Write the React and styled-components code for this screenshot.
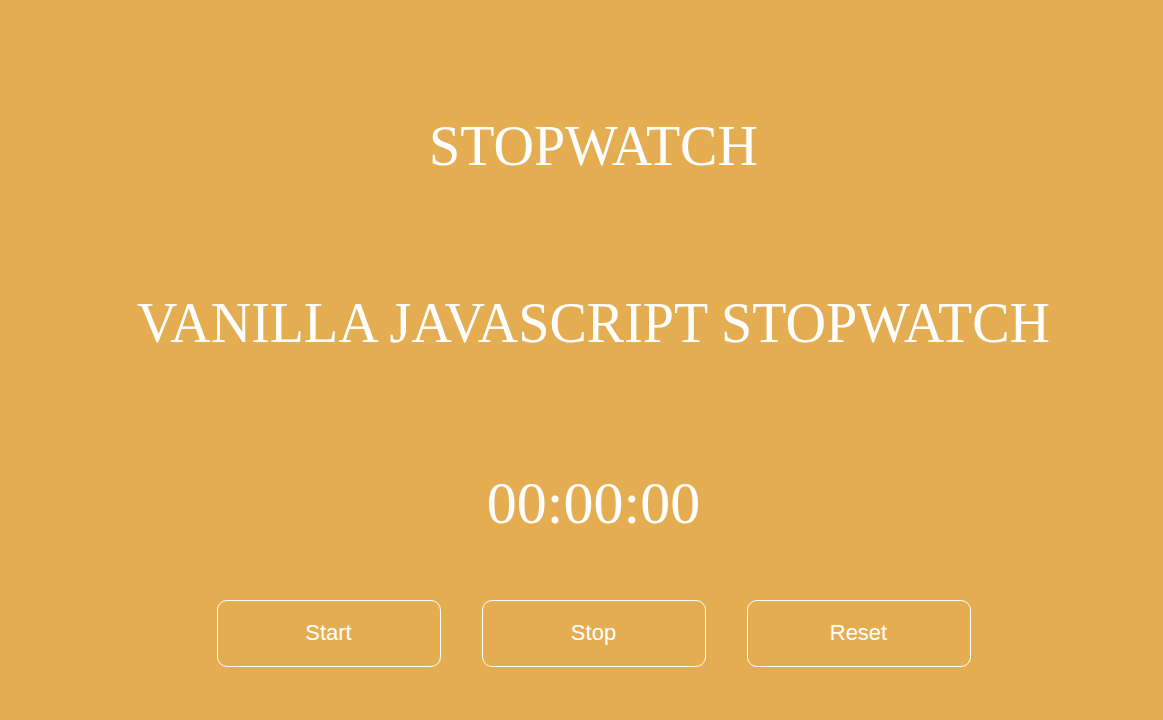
import React from "react";
import styled, { createGlobalStyle } from "styled-components";

const Global = createGlobalStyle`
  html, body { margin: 0; padding: 0; background: #e5ad52; }
  body { font-family: "Liberation Serif", "Times New Roman", serif; color: #fff; }
`;

const Page = styled.main`
  min-height: 720px;
  padding-left: 24px;
  display: flex;
  flex-direction: column;
  align-items: center;
  background: #e5ad52;
  box-sizing: border-box;
`;

const Title = styled.h1`
  font-family: "Liberation Serif", "Times New Roman", serif;
  font-weight: 400;
  font-size: 56px;
  line-height: 64px;
  margin: ${(p) => p.$top}px 0 0;
  color: #fff;
`;

const Timer = styled.div`
  font-family: "Liberation Serif", "Times New Roman", serif;
  font-size: 60px;
  line-height: 64px;
  margin-top: 116px;
  color: #fff;
`;

const Buttons = styled.div`
  display: flex;
  gap: 41px;
  margin-top: 65px;
`;

const Button = styled.button`
  width: 224px;
  height: 67px;
  padding: 0 0 2px;
  background: transparent;
  border: 1px solid #fff;
  border-radius: 10px;
  color: #fff;
  font-family: "Liberation Sans", Arial, sans-serif;
  font-size: 22px;
  cursor: pointer;
  box-sizing: border-box;
`;

export default function App() {
  return (
    <>
      <Global />
      <Page>
        <Title $top={114}>STOPWATCH</Title>
        <Title as="h2" $top={113}>VANILLA JAVASCRIPT STOPWATCH</Title>
        <Timer>00:00:00</Timer>
        <Buttons>
          <Button>Start</Button>
          <Button>Stop</Button>
          <Button>Reset</Button>
        </Buttons>
      </Page>
    </>
  );
}
